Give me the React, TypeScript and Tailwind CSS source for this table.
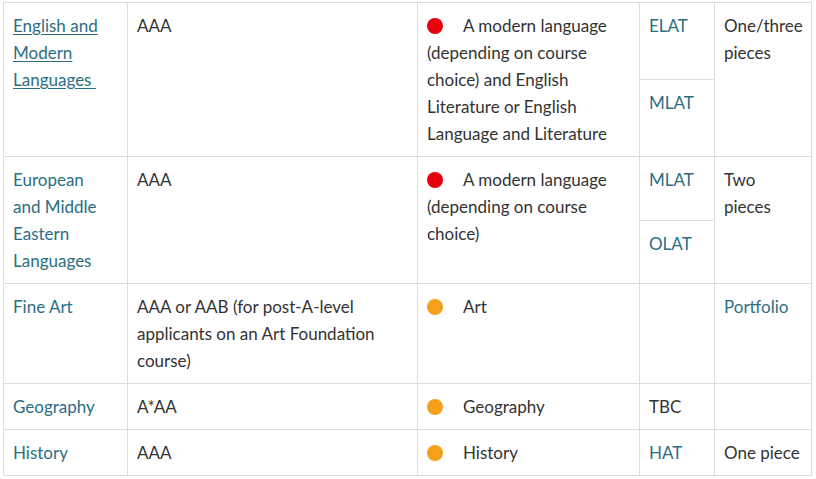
import type { ReactNode } from 'react';

type Cell = { text: ReactNode; link?: boolean };

interface Row {
  subject: string;
  subjectLink?: boolean;
  grades: string;
  dot: 'red' | 'orange';
  required: string;
  tests: Cell[];
  work: Cell;
}

const rows: Row[] = [
  {
    subject: 'English and Modern Languages\u00a0',
    subjectLink: true,
    grades: 'AAA',
    dot: 'red',
    required: 'A modern language (depending on course choice) and English Literature or English Language and Literature',
    tests: [{ text: 'ELAT', link: true }, { text: 'MLAT', link: true }],
    work: { text: 'One/three pieces' },
  },
  {
    subject: 'European and Middle Eastern Languages',
    grades: 'AAA',
    dot: 'red',
    required: 'A modern language (depending on course choice)',
    tests: [{ text: 'MLAT', link: true }, { text: 'OLAT', link: true }],
    work: { text: 'Two pieces' },
  },
  {
    subject: 'Fine Art',
    grades: 'AAA or AAB (for post-A-level applicants on an Art Foundation course)',
    dot: 'orange',
    required: 'Art',
    tests: [{ text: '' }],
    work: { text: 'Portfolio', link: true },
  },
  {
    subject: 'Geography',
    grades: 'A*AA',
    dot: 'orange',
    required: 'Geography',
    tests: [{ text: 'TBC' }],
    work: { text: '' },
  },
  {
    subject: 'History',
    grades: 'AAA',
    dot: 'orange',
    required: 'History',
    tests: [{ text: 'HAT', link: true }],
    work: { text: 'One piece' },
  },
];

const cell = 'border-r border-b border-[#dddddd] pl-[9px] pr-[9px] pt-[9px] pb-[9px]';

export default function App() {
  return (
    <div
      className="min-h-screen bg-white text-[17px] leading-[27px] text-[#333333] overflow-hidden"
      style={{ fontFamily: 'Lato, "Liberation Sans", sans-serif' }}
    >
      <div className="ml-[3px] mt-[2px] w-[809px] border-l border-t border-[#dddddd]">
        {rows.map(row => (
          <div key={row.subject} className="grid grid-cols-[124px_290px_222px_75px_97px]">
            <div className="border-r border-b border-[#dddddd] pl-[9px] pr-[14px] pt-[9px] pb-[9px]">
              {row.subjectLink ? (
                <a href="#" className="text-[#2b6e84] underline underline-offset-2">{row.subject}</a>
              ) : (
                <span className="text-[#2b6e84]">{row.subject}</span>
              )}
            </div>
            <div className={cell}>{row.grades}</div>
            <div className={cell}>
              <span
                className={`inline-block w-4 h-4 rounded-full align-[-2px] mr-5 ${
                  row.dot === 'red' ? 'bg-[#e8000c]' : 'bg-[#f5a01a]'
                }`}
              />
              {row.required}
            </div>
            <div className="flex flex-col">
              {row.tests.map((t, i) => (
                <div key={i} className={`flex-1 ${cell} ${t.link ? 'text-[#2b6e84]' : ''}`}>
                  {t.text}
                </div>
              ))}
            </div>
            <div className={`${cell} ${row.work.link ? 'text-[#2b6e84]' : ''}`}>{row.work.text}</div>
          </div>
        ))}
      </div>
    </div>
  );
}
